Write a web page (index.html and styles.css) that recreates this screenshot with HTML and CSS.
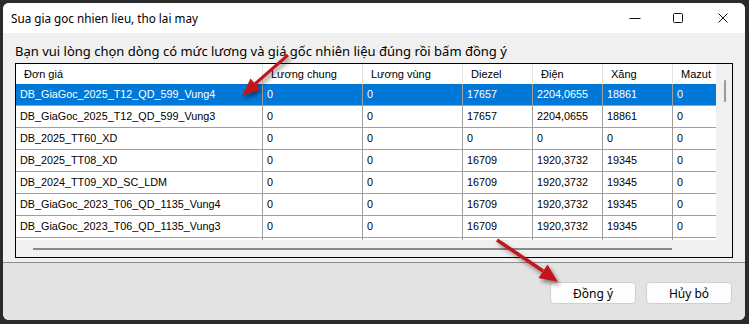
FILE: index.html
```html
<!DOCTYPE html>
<html lang="vi">
<head>
  <meta charset="UTF-8" />
  <meta name="viewport" content="width=device-width, initial-scale=1" />
  <title>Sua gia goc nhien lieu, tho lai may</title>
  <link rel="stylesheet" href="styles.css">
</head>
<body>
  <div class="window">
    <div class="titlebar">
      <span class="title">Sua gia goc nhien lieu, tho lai may</span>
      <div class="caption">
        <span class="cap-btn cap-min">
          <svg width="12" height="12" viewBox="0 0 12 12"><path d="M0.5 6.5 H11.5" stroke="#111" stroke-width="1"/></svg>
        </span>
        <span class="cap-btn cap-max">
          <svg width="12" height="12" viewBox="0 0 12 12"><rect x="1.5" y="1.5" width="9" height="9" rx="1" fill="none" stroke="#111" stroke-width="1"/></svg>
        </span>
        <span class="cap-btn cap-close">
          <svg width="12" height="12" viewBox="0 0 12 12"><path d="M1.5 1.5 L10.5 10.5 M10.5 1.5 L1.5 10.5" stroke="#111" stroke-width="1"/></svg>
        </span>
      </div>
    </div>

    <div class="client">
      <div class="prompt">Bạn vui lòng chọn dòng có mức lương và giá gốc nhiên liệu đúng rồi bấm đồng ý</div>

      <div class="grid">
        <div class="grid-main">
          <div class="grid-head">
            <div class="hcell">Đơn giá</div>
            <div class="hcell">Lương chung</div>
            <div class="hcell">Lương vùng</div>
            <div class="hcell">Diezel</div>
            <div class="hcell">Điện</div>
            <div class="hcell">Xăng</div>
            <div class="hcell">Mazut</div>
          </div>
          <div class="grid-body" id="gridBody"></div>
          <div class="hscroll"><div class="hthumb"></div></div>
        </div>
        <div class="vscroll"><div class="vthumb"></div></div>
      </div>
    </div>

    <div class="footer">
      <button class="btn">Đồng ý</button>
      <button class="btn">Hủy bỏ</button>
    </div>
  </div>

  <svg class="arrows" width="749" height="324" viewBox="0 0 749 324">
    <defs>
      <filter id="shadow" x="-20%" y="-20%" width="140%" height="140%">
        <feDropShadow dx="2" dy="3" stdDeviation="2" flood-color="#000" flood-opacity="0.45"/>
      </filter>
    </defs>
    <g filter="url(#shadow)" fill="#c3161c" stroke="#c3161c">
      <line x1="288" y1="55" x2="255" y2="84" stroke-width="3"/>
      <polygon points="242,96 260,89.5 250.5,78.5" stroke="none"/>
      <line x1="497" y1="240" x2="543" y2="271" stroke-width="3.5"/>
      <polygon points="558,282 538.5,278 547.5,264.5" stroke="none"/>
    </g>
  </svg>

  <script>
    const rows = [
      ['DB_GiaGoc_2025_T12_QD_599_Vung4', '0', '0', '17657', '2204,0655', '18861', '0'],
      ['DB_GiaGoc_2025_T12_QD_599_Vung3', '0', '0', '17657', '2204,0655', '18861', '0'],
      ['DB_2025_TT60_XD', '0', '0', '0', '0', '0', '0'],
      ['DB_2025_TT08_XD', '0', '0', '16709', '1920,3732', '19345', '0'],
      ['DB_2024_TT09_XD_SC_LDM', '0', '0', '16709', '1920,3732', '19345', '0'],
      ['DB_GiaGoc_2023_T06_QD_1135_Vung4', '0', '0', '16709', '1920,3732', '19345', '0'],
      ['DB_GiaGoc_2023_T06_QD_1135_Vung3', '0', '0', '16709', '1920,3732', '19345', '0'],
      ['', '', '', '', '', '', '']
    ];

    const body = document.getElementById('gridBody');
    rows.forEach((cells, index) => {
      const row = document.createElement('div');
      row.className = index === 0 ? 'grid-row selected' : 'grid-row';
      row.innerHTML = cells.map(c => `<div class="cell">${c}</div>`).join('');
      body.appendChild(row);
    });
  </script>
</body>
</html>
```

FILE: styles.css
```css
body {
  margin: 0;
  background-color: #2b2b2b;
  font-family: 'Liberation Sans', Arial, sans-serif;
  color: #000;
  overflow: hidden;
}

.window {
  width: 742px;
  height: 317px;
  margin: 3px 0 0 3px;
  border-radius: 6px;
  overflow: hidden;
  display: flex;
  flex-direction: column;
  background-color: #f0f0f0;
}

/* Title bar */
.titlebar {
  height: 30px;
  flex: none;
  background-color: #fff;
  display: flex;
  align-items: center;
  justify-content: space-between;
}

.title {
  padding-left: 8px;
  font-family: 'Noto Sans', sans-serif;
  font-size: 11.7px;
  color: #000;
}

.caption {
  display: flex;
  height: 30px;
}

.cap-btn {
  width: 45px;
  height: 30px;
  display: flex;
  align-items: center;
  justify-content: center;
}

.cap-min {
  width: 40px;
}

/* Client area */
.client {
  height: 230px;
  flex: none;
  padding: 8px 0 0 12px;
  box-sizing: border-box;
  border-bottom: 1px solid #8c8c8c;
}

.prompt {
  height: 22px;
  line-height: 20px;
  font-family: 'Noto Sans', sans-serif;
  font-size: 13px;
  color: #000;
  white-space: nowrap;
}

.grid {
  width: 718px;
  height: 195px;
  box-sizing: border-box;
  border: 1px solid #000;
  display: flex;
}

.grid-main {
  width: 700px;
  display: flex;
  flex-direction: column;
}

.grid-head,
.grid-row {
  display: grid;
  grid-template-columns: 247px 100px 100px 70px 70px 70px 43px;
}

.grid-head {
  height: 20px;
  background-color: #fff;
}

.hcell {
  box-sizing: border-box;
  border-right: 1px solid #e3e3e3;
  padding-left: 8px;
  font-size: 11px;
  line-height: 20px;
  white-space: nowrap;
  overflow: hidden;
}

.hcell:last-child {
  border-right: none;
}

.grid-body {
  height: 156px;
  overflow: hidden;
  background-color: #fff;
}

.grid-row {
  height: 22px;
  box-sizing: border-box;
  border-bottom: 1px solid #a0a0a0;
}

.cell {
  box-sizing: border-box;
  border-right: 1px solid #a0a0a0;
  padding-left: 4px;
  font-size: 10.8px;
  line-height: 21px;
  white-space: nowrap;
  overflow: hidden;
}

.cell:last-child {
  border-right: none;
}

.grid-row.selected {
  background-color: #0078d7;
  color: #fff;
}

.hscroll {
  height: 17px;
  background-color: #f0f0f0;
  padding: 8px 0 0 17px;
  box-sizing: border-box;
}

.hthumb {
  width: 639px;
  height: 2px;
  background-color: #8a8a8a;
}

.vscroll {
  width: 16px;
  background-color: #f0f0f0;
  padding: 16px 0 0 8px;
  box-sizing: border-box;
}

.vthumb {
  width: 2px;
  height: 22px;
  background-color: #9a9a9a;
  border-radius: 1px;
}

/* Footer with buttons */
.footer {
  flex: 1;
  background-color: #e3e3e3;
  display: flex;
  justify-content: flex-end;
  align-items: flex-start;
  gap: 10px;
  padding: 19px 13px 0 0;
}

.btn {
  width: 86px;
  height: 22px;
  background-color: #fdfdfd;
  border: 1px solid #d0d0d0;
  border-radius: 4px;
  font-family: 'Noto Sans', sans-serif;
  font-size: 12px;
  color: #000;
  padding: 0;
}

.arrows {
  position: absolute;
  top: 0;
  left: 0;
  pointer-events: none;
}
```
